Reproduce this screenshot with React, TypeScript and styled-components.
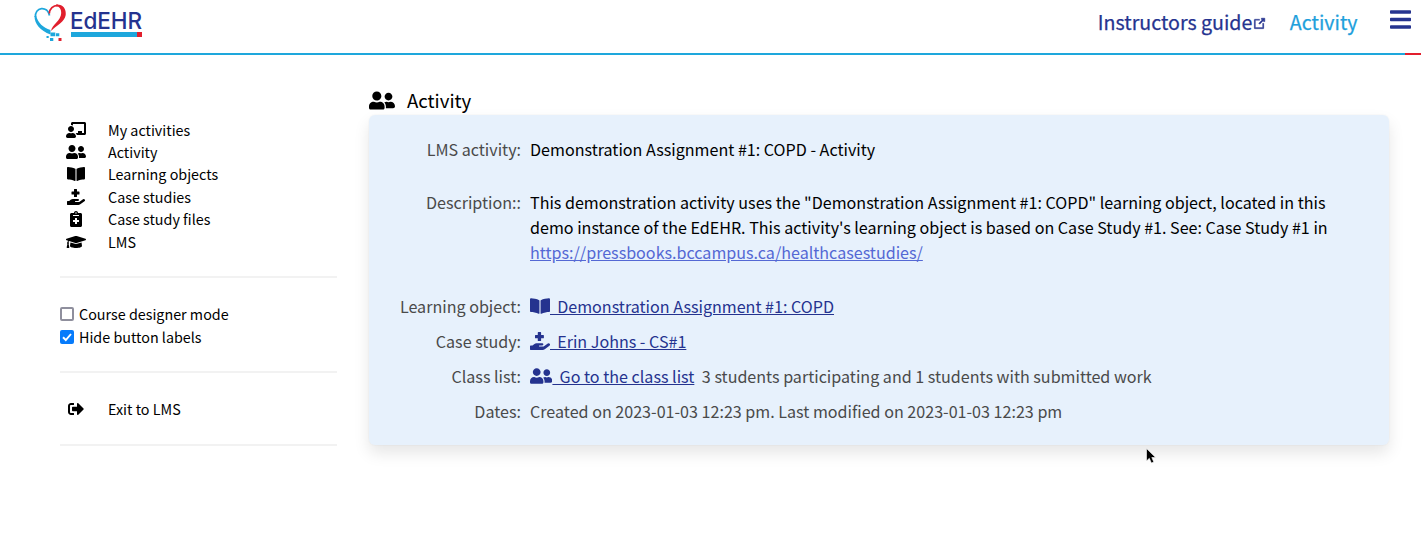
import React from 'react';
import styled, { createGlobalStyle } from 'styled-components';
import {
  FaBars, FaBookOpen, FaChalkboardTeacher, FaGraduationCap, FaHandHoldingMedical,
  FaNotesMedical, FaSignOutAlt, FaUserFriends,
} from 'react-icons/fa';

const Global = createGlobalStyle`
  * { box-sizing: border-box; }
  body {
    margin: 0;
    background: #fff;
    color: #000;
    font-family: "Noto Sans CJK SC", "Noto Sans", sans-serif;
  }
  svg { display: block; flex: none; }
`;

const Page = styled.div`
  position: relative;
  height: 547px;
  overflow: hidden;
`;
const Header = styled.header`
  height: 53px;
  display: flex;
  justify-content: space-between;
  padding: 0 10px 0 34px;
`;
const HeaderRule = styled.div`
  height: 2px;
  background: linear-gradient(to right, #1ea7dc 1405px, #e11f2d 1405px);
`;
const Brand = styled.a`
  display: flex;
  padding-top: 4px;
`;
const Wordmark = styled.div`
  margin-left: 4px;
  padding-top: 5px;
  width: 71px;
`;
const WordmarkText = styled.div`
  height: 23px;
  font: 500 22.5px/24px Inter, sans-serif;
  letter-spacing: -0.1px;
  margin-left: -1px;
  color: #25338f;
`;
const WordmarkBar = styled.div`
  height: 5px;
  background: linear-gradient(to right, #1ea7dc 66px, #e11f2d 66px);
`;
const Nav = styled.nav`
  display: flex;
  height: 45px;
  align-items: center;
`;
const NavLink = styled.a<{ $active?: boolean }>`
  display: flex;
  align-items: center;
  margin-top: -2px;
  font-size: 19.6px;
  line-height: 24px;
  -webkit-text-stroke: 0.25px currentColor;
  color: ${p => (p.$active ? '#1ea0dc' : '#25338f')};
  margin-right: ${p => (p.$active ? 32.5 : 22.5)}px;
  svg { margin-top: 3px; }
`;
const MenuButton = styled.div`
  height: 45px;
  padding-top: 7px;
  color: #25338f;
  svg { width: 21px; height: 25px; }
`;
const Body = styled.div`
  display: flex;
  padding: 0 32px 0 60px;
`;
const Sidebar = styled.aside`
  width: 277px;
  margin-right: 32px;
  padding-top: 63.4px;
`;
const MenuRow = styled.div`
  display: flex;
  align-items: center;
  height: 22.4px;
  font-size: 14.33px;
  line-height: 22px;
`;
const MenuIcon = styled.span<{ $width: number }>`
  width: 32px;
  margin-right: 16px;
  display: flex;
  justify-content: center;
  svg { height: 16px; width: ${p => p.$width}px; }
`;
const Divider = styled.div<{ $top: number; $bottom: number }>`
  height: 2px;
  background: #f2f2f2;
  margin: ${p => p.$top}px 0 ${p => p.$bottom}px;
`;
const CheckRow = styled.label`
  display: flex;
  align-items: center;
  height: 23px;
  font-size: 14.33px;
  line-height: 22px;
`;
const CheckBox = styled.span<{ $on?: boolean }>`
  width: 14px;
  height: 14px;
  margin-right: 5px;
  border-radius: 2px;
  border: ${p => (p.$on ? 'none' : '2px solid #8f8f9d')};
  background: ${p => (p.$on ? '#067bfb' : '#fff')};
`;
const Main = styled.main`
  width: 1020px;
  padding-top: 31px;
`;
const Title = styled.h1`
  display: flex;
  align-items: center;
  height: 29px;
  padding-bottom: 1px;
  margin: 0;
  font-size: 18.6px;
  line-height: 28px;
  font-weight: 400;
  svg { margin-right: 12px; width: 26px; height: 21px; }
`;
const Card = styled.section`
  height: 330px;
  border-radius: 6px;
  background: #e7f1fc;
  box-shadow: 0 8px 16px rgba(10, 10, 10, 0.1), 0 0 0 1px rgba(10, 10, 10, 0.015);
  padding-top: 22px;
  font-size: 16.1px;
  line-height: 25.3px;
`;
const Field = styled.div<{ $gap?: number }>`
  display: flex;
  margin-bottom: ${p => p.$gap ?? 9.7}px;
`;
const Label = styled.div`
  width: 152px;
  margin-right: 9px;
  text-align: right;
  white-space: nowrap;
  color: #4a4a4a;
`;
const Value = styled.div<{ $muted?: boolean }>`
  display: flex;
  white-space: nowrap;
  color: ${p => (p.$muted ? '#4a4a4a' : '#000')};
`;
const Paragraph = styled.div``;
const TextLink = styled.a`
  color: #5468d4;
  text-decoration: underline;
`;
const ItemLink = styled.a<{ $icon: number }>`
  display: flex;
  color: #25338f;
  margin-right: 7.5px;
  svg { margin-top: 3px; height: 18px; width: ${p => p.$icon}px; }
`;
const ItemText = styled.span`
  white-space: pre;
  text-decoration: underline;
`;
const Pointer = styled.div`
  position: absolute;
  left: 1145px;
  top: 447px;
`;

const HeartLogo = () => (
  <svg width="33" height="38" viewBox="0 0 33 38" fill="none">
    <path d="M15.500 11.500C14.500 6.500 11 4.300 7.500 4.600C3.500 5 1.300 8.500 1.400 13" stroke="#1ea7dc" strokeWidth="1.8" />
    <path d="M.5 12C.5 20 6 26.500 16.500 30.500V26C9 23.500 4 19 2.300 12Z" fill="#1ea7dc" />
    <path d="M15.300 9.500C15.600 5 19 1.300 24 1.400" stroke="#e11f2d" strokeWidth="1.8" />
    <path d="M22 .5C29 0 32.500 5 31.700 11C30.500 18 23.500 20.500 17 27C18 20.500 27 17 27.200 9C27.300 5 25.500 2.500 22 2.300Z" fill="#e11f2d" />
    <path d="M16.500 28.500h4.800v3.800h-4.800zM22 29.300h3.300v2.900H22zM12.500 32h2.200v2h-2.200zM16 34h3.300v3H16z" fill="#1ea7dc" />
    <path d="M24.500 34h3v3h-3z" fill="#e11f2d" />
  </svg>
);

const ExternalIcon = () => (
  <svg width="15" height="15" viewBox="0 0 100 100" fill="#25338f">
    <path d="M18.800 85.100h56c2.200 0 4-1.800 4-4v-32h-8v28h-48v-48h28v-8h-32c-2.200 0-4 1.800-4 4v56c0 2.200 1.800 4 4 4z" stroke="#25338f" strokeWidth="2" />
    <path d="M45.700 48.700l5.600 5.600l25.900-25.800v8.700h8V14.900H62.800v8h8.700z" stroke="#25338f" strokeWidth="4" />
  </svg>
);

const CheckMark = () => (
  <svg width="14" height="14" viewBox="0 0 14 14" fill="none">
    <path d="M3 7.3L5.800 10L11 4" stroke="#fff" strokeWidth="1.9" />
  </svg>
);

const menu = [
  { icon: <FaChalkboardTeacher />, width: 20, text: 'My activities' },
  { icon: <FaUserFriends />, width: 20, text: 'Activity' },
  { icon: <FaBookOpen />, width: 18, text: 'Learning objects' },
  { icon: <FaHandHoldingMedical />, width: 18, text: 'Case studies' },
  { icon: <FaNotesMedical />, width: 12, text: 'Case study files' },
  { icon: <FaGraduationCap />, width: 20, text: 'LMS' },
];

export default function App() {
  return (
    <Page>
      <Global />
      <Header>
        <Brand>
          <HeartLogo />
          <Wordmark>
            <WordmarkText>EdEHR</WordmarkText>
            <WordmarkBar />
          </Wordmark>
        </Brand>
        <Nav>
          <NavLink>Instructors guide<ExternalIcon /></NavLink>
          <NavLink $active>Activity</NavLink>
          <MenuButton><FaBars /></MenuButton>
        </Nav>
      </Header>
      <HeaderRule />
      <Body>
        <Sidebar>
          {menu.map(m => (
            <MenuRow key={m.text}><MenuIcon $width={m.width}>{m.icon}</MenuIcon>{m.text}</MenuRow>
          ))}
          <Divider $top={23.6} $bottom={24.2} />
          <CheckRow><CheckBox />Course designer mode</CheckRow>
          <CheckRow><CheckBox $on><CheckMark /></CheckBox>Hide button labels</CheckRow>
          <Divider $top={22.8} $bottom={24} />
          <MenuRow><MenuIcon $width={16}><FaSignOutAlt /></MenuIcon>Exit to LMS</MenuRow>
          <Divider $top={24} $bottom={0} />
        </Sidebar>
        <Main>
          <Title><FaUserFriends />Activity</Title>
          <Card>
            <Field $gap={27.5}>
              <Label>LMS activity:</Label>
              <Value>Demonstration Assignment #1: COPD - Activity</Value>
            </Field>
            <Field $gap={28.2}>
              <Label>Description::</Label>
              <Value>
                <Paragraph>
                  This demonstration activity uses the "Demonstration Assignment #1: COPD" learning object, located in this<br />
                  demo instance of the EdEHR. This activity's learning object is based on Case Study #1. See: Case Study #1 in<br />
                  <TextLink>https://pressbooks.bccampus.ca/healthcasestudies/</TextLink>
                </Paragraph>
              </Value>
            </Field>
            <Field>
              <Label>Learning object:</Label>
              <Value><ItemLink $icon={20}><FaBookOpen /><ItemText>{'\u00a0 Demonstration Assignment #1: COPD'}</ItemText></ItemLink></Value>
            </Field>
            <Field>
              <Label>Case study:</Label>
              <Value><ItemLink $icon={20}><FaHandHoldingMedical /><ItemText>{'\u00a0 Erin Johns - CS#1'}</ItemText></ItemLink></Value>
            </Field>
            <Field>
              <Label>Class list:</Label>
              <Value $muted>
                <ItemLink $icon={22.4}><FaUserFriends /><ItemText>{'\u00a0 Go to the class list'}</ItemText></ItemLink>
                3 students participating and 1 students with submitted work
              </Value>
            </Field>
            <Field>
              <Label>Dates:</Label>
              <Value $muted>Created on 2023-01-03 12:23 pm. Last modified on 2023-01-03 12:23 pm</Value>
            </Field>
          </Card>
        </Main>
      </Body>
      <Pointer>
        <svg width="12" height="18" viewBox="0 0 12 18">
          <path d="M1.5 1.5V14L4.300 11.300L6.400 16L8.800 15L6.800 10.500H10.600Z" fill="#000" stroke="#fff" strokeWidth=".6" />
        </svg>
      </Pointer>
    </Page>
  );
}
